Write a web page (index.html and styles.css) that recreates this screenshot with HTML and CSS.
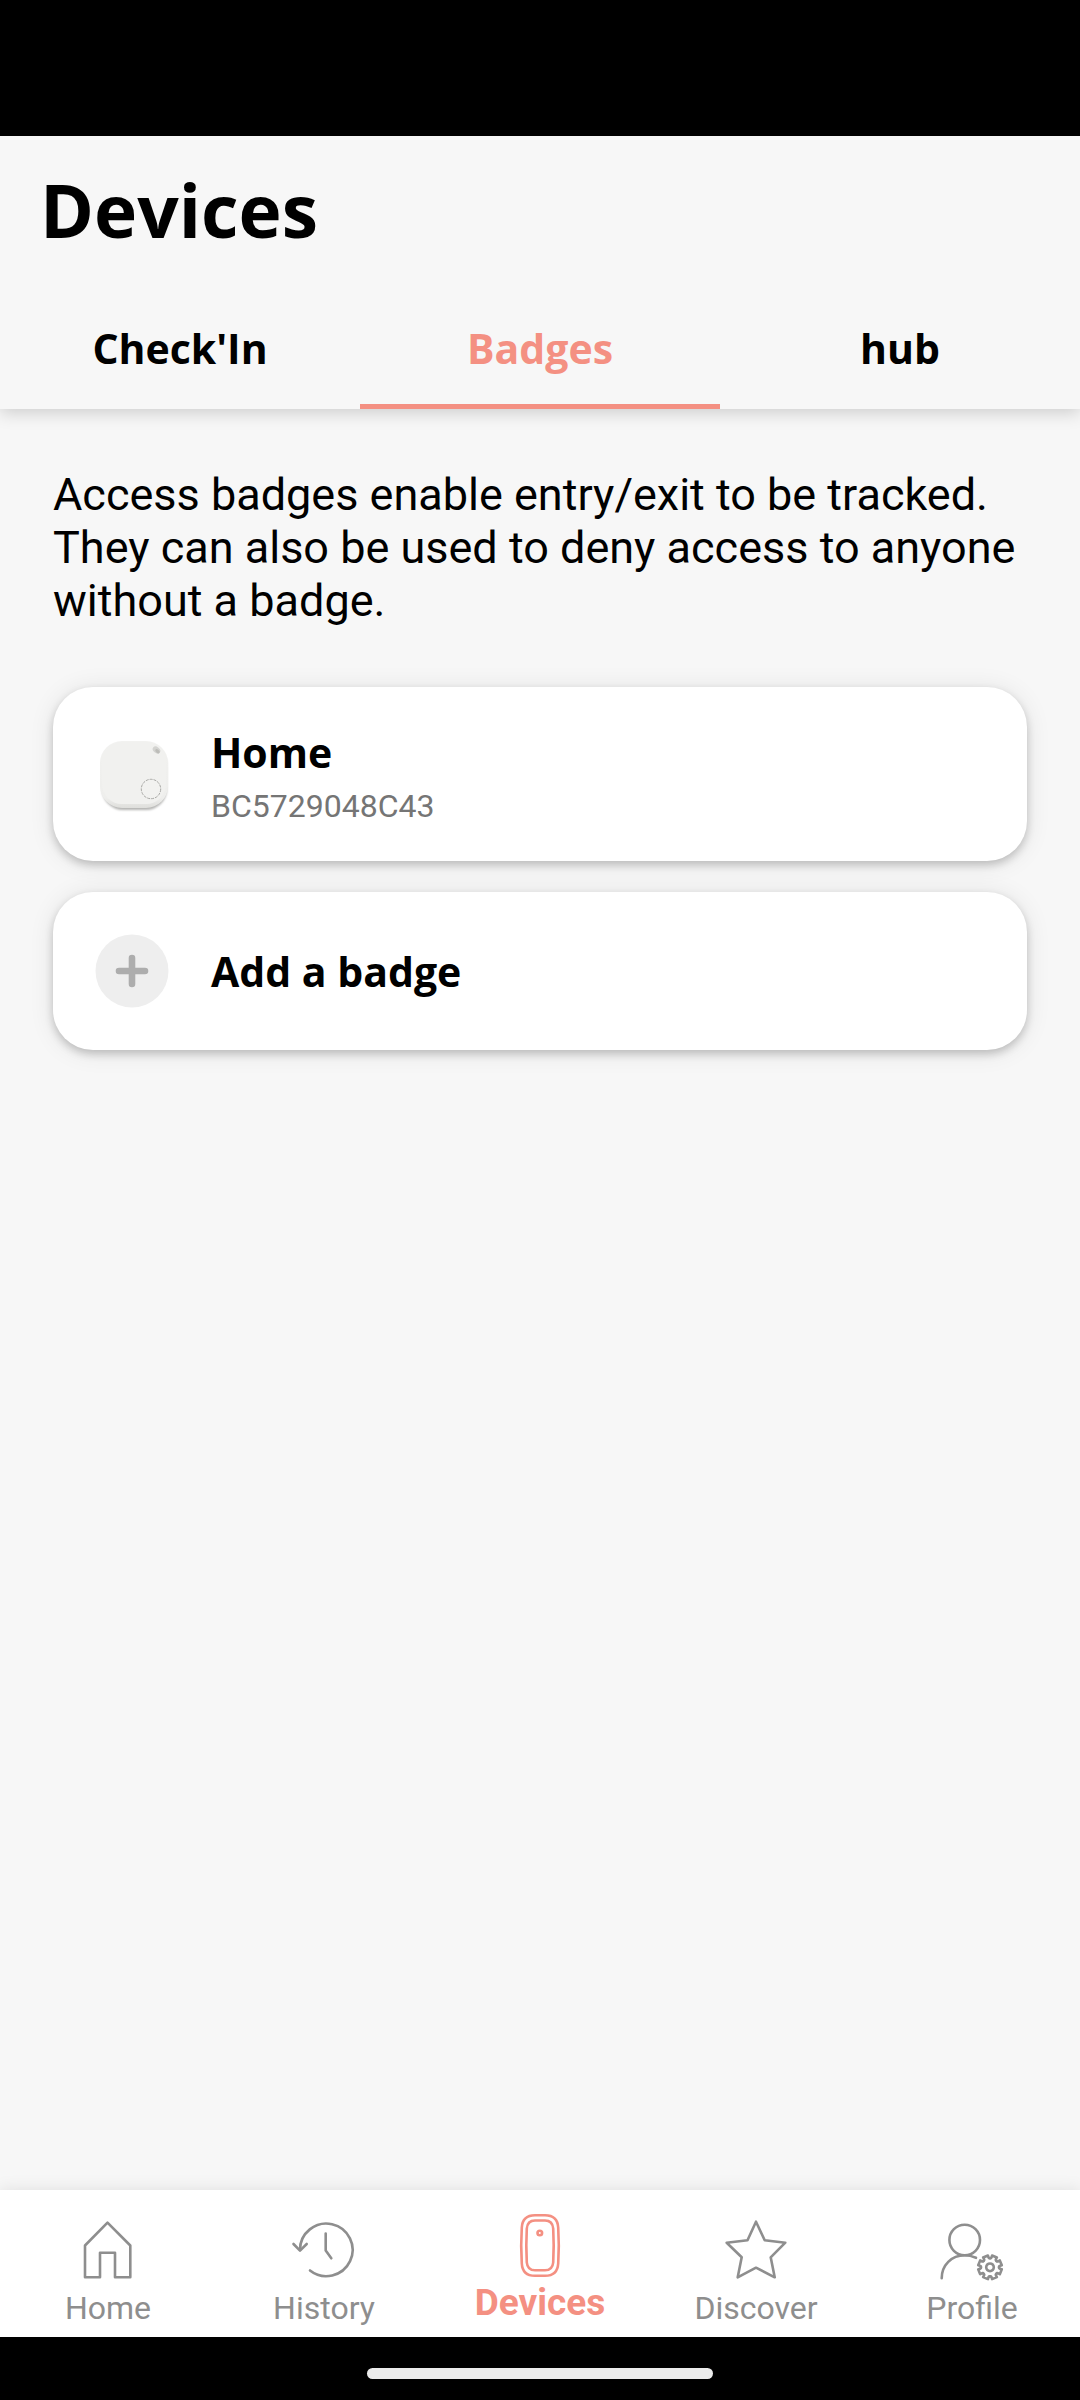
FILE: index.html
```html
<!DOCTYPE html>
<html lang="en">

<head>
    <meta charset="UTF-8">
    <meta name="viewport" content="width=device-width, initial-scale=1.0">
    <title>Devices</title>
    <link rel="stylesheet" href="styles.css">
</head>

<body>
    <div class="status-bar"></div>

    <header class="header">
        <h1 class="title">Devices</h1>
        <div class="tabs" role="tablist">
            <button class="tab" type="button" role="tab" aria-selected="false">Check'In</button>
            <button class="tab active" type="button" role="tab" aria-selected="true">Badges</button>
            <button class="tab" type="button" role="tab" aria-selected="false">hub</button>
        </div>
    </header>

    <main class="content">
        <p class="intro">Access badges enable entry/exit to be tracked. They can also be used to deny access to anyone without a badge.</p>

        <div class="card-list">
            <button class="card badge-card" type="button">
                <svg class="card-icon" viewBox="0 0 74 74" aria-hidden="true">
                    <defs>
                        <linearGradient id="badge-edge" x1="0" y1="0" x2="0" y2="1">
                            <stop offset="0" stop-color="#f2f2f0" />
                            <stop offset="0.85" stop-color="#eeeeec" />
                            <stop offset="1" stop-color="#dededb" />
                        </linearGradient>
                        <filter id="badge-shadow" x="-20%" y="-20%" width="140%" height="140%">
                            <feGaussianBlur stdDeviation="1.2" />
                        </filter>
                    </defs>
                    <rect x="7" y="5" width="65" height="65" rx="21" fill="#b4b4b2" filter="url(#badge-shadow)" />
                    <rect x="5" y="1" width="68" height="67" rx="22" fill="url(#badge-edge)" />
                    <rect x="7" y="2" width="64" height="62" rx="20" fill="#f1f1ef" />
                    <ellipse cx="61.5" cy="10" rx="4.2" ry="3" transform="rotate(40 61.5 10)" fill="#d3d3d0" />
                    <ellipse cx="62.5" cy="11.2" rx="2.6" ry="1.6" transform="rotate(40 62.5 11.2)" fill="#bdbdb9" />
                    <circle cx="56" cy="49" r="9.7" fill="#f2f2f0" stroke="#a0a09d" stroke-width="0.9" stroke-dasharray="3 1" />
                </svg>
                <span class="card-text">
                    <span class="card-title">Home</span>
                    <span class="card-desc">BC5729048C43</span>
                </span>
            </button>

            <button class="card add-card" type="button">
                <svg class="card-icon" viewBox="0 0 74 74" aria-hidden="true">
                    <circle cx="37" cy="37" r="36.5" fill="#eeeeee" />
                    <path d="M37 24v26M24 37h26" fill="none" stroke="#adadad" stroke-width="6.6" stroke-linecap="round" />
                </svg>
                <span class="card-title">Add a badge</span>
            </button>
        </div>
    </main>

    <nav class="nav-bar">
        <a class="nav-item" href="#home">
            <svg class="nav-icon" viewBox="0 0 72 72" aria-hidden="true">
                <path d="M35.5 7.7L58.3 30.5V62.3H43V37.7H28V62.3H13V30.5Z" />
            </svg>
            <span>Home</span>
        </a>
        <a class="nav-item" href="#history">
            <svg class="nav-icon" viewBox="0 0 72 72" aria-hidden="true">
                <path d="M12 35A26.3 26.3 0 1 1 22 55.5" />
                <path d="M5.5 29L12 35.6L18.7 29" />
                <path d="M37.7 18.5V35.5L43.3 43.3" />
            </svg>
            <span>History</span>
        </a>
        <a class="nav-item active" href="#devices" aria-current="page">
            <svg class="nav-icon" viewBox="0 0 72 72" aria-hidden="true">
                <path d="M31 5.2H41Q53.5 5.2 54.2 17.5Q55.4 35.5 54.2 53.5Q53.5 65.8 41 65.8H31Q18.5 65.8 17.8 53.5Q16.6 35.5 17.8 17.5Q18.5 5.2 31 5.2Z" />
                <path d="M31 10.5H41Q48.5 10.5 49.2 18.5Q50.2 35.5 49.2 52.5Q48.5 60.3 41 60.3H31Q23.5 60.3 22.8 52.5Q21.8 35.5 22.8 18.5Q23.5 10.5 31 10.5Z" />
                <circle cx="35.8" cy="23" r="2.3" />
            </svg>
            <span>Devices</span>
        </a>
        <a class="nav-item" href="#discover">
            <svg class="nav-icon" viewBox="0 0 72 72" aria-hidden="true">
                <path d="M36 6.7L44.7 25.3L65.3 27.7L50.7 42.3L54.7 62.3L36 52.7L17.7 62.3L21.7 42.3L6.7 27.7L27.5 25.3Z" />
            </svg>
            <span>Discover</span>
        </a>
        <a class="nav-item" href="#profile">
            <svg class="nav-icon" viewBox="0 0 72 72" aria-hidden="true">
                <defs>
                    <path id="tooth" d="M-3.7 -8.4Q-2.2 -8.4 -2.4 -10L-2.6 -11.7H2.6L2.4 -10Q2.2 -8.4 3.7 -8.4" />
                </defs>
                <circle cx="28.7" cy="25" r="15.3" />
                <path d="M5.7 63.3C5.7 50 15.5 40.3 28.7 40.3C33 40.3 36.5 41.3 40 42.8" />
                <g transform="translate(54 52.3) rotate(22.5)">
                    <circle r="3.8" />
                    <use href="#tooth" />
                    <use href="#tooth" transform="rotate(45)" />
                    <use href="#tooth" transform="rotate(90)" />
                    <use href="#tooth" transform="rotate(135)" />
                    <use href="#tooth" transform="rotate(180)" />
                    <use href="#tooth" transform="rotate(225)" />
                    <use href="#tooth" transform="rotate(270)" />
                    <use href="#tooth" transform="rotate(315)" />
                </g>
            </svg>
            <span>Profile</span>
        </a>
    </nav>

    <div class="gesture-bar"><span class="gesture-handle"></span></div>
</body>

</html>
```

FILE: styles.css
```css
* {
    box-sizing: border-box;
}

body {
    margin: 0;
    min-height: 100vh;
    display: flex;
    flex-direction: column;
    background: #f7f7f7;
    color: #000;
    font-family: Roboto, sans-serif;
}

button {
    border: none;
    margin: 0;
    font: inherit;
    color: inherit;
    cursor: pointer;
}

.status-bar {
    height: 136px;
    background: #000;
}

.header {
    padding-top: 34px;
    background: #f7f7f7;
    box-shadow: 0 4px 16px rgba(0, 0, 0, 0.17);
}

.title {
    margin: 0 0 24px;
    padding: 0 40px;
    font-family: "Open Sans", sans-serif;
    font-size: 73px;
    font-weight: 700;
    line-height: 80px;
}

.tabs {
    display: grid;
    grid-template-columns: repeat(3, 1fr);
}

.tab {
    padding: 50px 0 32px;
    background: none;
    border-bottom: 5px solid transparent;
    font-family: "Open Sans", sans-serif;
    font-size: 41px;
    font-weight: 700;
    line-height: 48px;
}

.tab.active {
    color: #f49082;
    border-bottom-color: #f49082;
}

.content {
    flex: 1;
    padding: 59px 53px;
}

.intro {
    margin: 0 0 60px;
    font-size: 45px;
    line-height: 53px;
}

.card-list {
    display: flex;
    flex-direction: column;
    gap: 31px;
}

.card {
    display: flex;
    align-items: center;
    gap: 42px;
    padding: 42px;
    background: #fff;
    border-radius: 40px;
    box-shadow: 0 4px 8px rgba(0, 0, 0, 0.2), 0 2px 26px rgba(0, 0, 0, 0.09);
    text-align: left;
}

.badge-card {
    padding-top: 41px;
    padding-bottom: 35px;
}

.card-icon {
    width: 74px;
    height: 74px;
    flex-shrink: 0;
}

.card-text {
    display: flex;
    flex-direction: column;
    gap: 10px;
}

.card-title {
    font-family: "Open Sans", sans-serif;
    font-size: 41px;
    font-weight: 700;
    line-height: 48px;
}

.card-desc {
    font-size: 32px;
    line-height: 40px;
    color: #757575;
}

.nav-bar {
    display: grid;
    grid-template-columns: repeat(5, 1fr);
    background: #fff;
    box-shadow: 0 0 16px rgba(0, 0, 0, 0.1);
}

.nav-item {
    display: flex;
    flex-direction: column;
    align-items: center;
    gap: 3px;
    padding: 25px 0 11px;
    font-size: 32px;
    line-height: 36px;
    color: #8e8e8e;
    text-decoration: none;
}

.nav-item.active {
    padding-top: 20px;
    font-size: 37px;
    font-weight: 700;
    color: #f49082;
}

.nav-icon {
    width: 72px;
    height: 72px;
    fill: none;
    stroke: currentColor;
    stroke-width: 2.6;
    stroke-linecap: round;
    stroke-linejoin: round;
}

.gesture-bar {
    display: flex;
    justify-content: center;
    padding: 31px 0 21px;
    background: #000;
    z-index: 1;
}

.gesture-handle {
    width: 32%;
    height: 11px;
    border-radius: 6px;
    background: #ebebeb;
}
```
